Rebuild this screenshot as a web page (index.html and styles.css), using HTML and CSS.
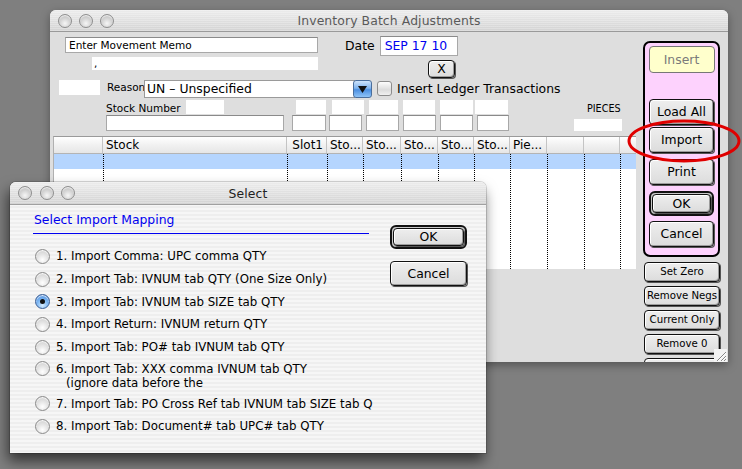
FILE: index.html
```html
<!DOCTYPE html>
<html>
<head>
<meta charset="utf-8">
<link rel="stylesheet" href="styles.css">
</head>
<body>
<div class="desk">
  <div class="win main-win">
    <div class="titlebar">
      <div class="lights"><span></span><span></span><span></span></div>
      <div class="title inactive">Inventory Batch Adjustments</div>
    </div>
    <div class="win-body">
      <div class="form">
        <div class="row r1">
          <div class="field memo">Enter Movement Memo</div>
          <div class="lbl-date">Date</div>
          <div class="field date">SEP 17 10</div>
        </div>
        <div class="row r2">
          <div class="field comma">,</div>
          <div class="btn xbtn">X</div>
        </div>
        <div class="row r3">
          <div class="blank reason-blank"></div>
          <div class="lbl-small reason-lbl">Reason</div>
          <div class="select">
            <span class="select-text">UN – Unspecified</span>
            <span class="select-arrow"><svg width="9" height="7" viewBox="0 0 9 7"><path d="M0 0 H9 L4.5 7 Z" fill="#111"/></svg></span>
          </div>
          <span class="checkbox"></span>
          <span class="chk-label">Insert Ledger Transactions</span>
        </div>
        <div class="row r4">
          <div class="lbl-small stock-lbl">Stock Number</div>
          <div class="blank b-stock"></div>
          <div class="blank b1"></div>
          <div class="blank b2"></div>
          <div class="blank b3"></div>
          <div class="blank b4"></div>
          <div class="blank b5"></div>
          <div class="blank b6"></div>
          <div class="lbl-tiny pieces">PIECES</div>
        </div>
        <div class="row r5">
          <div class="field stock-in"></div>
          <div class="field i1"></div>
          <div class="field i2"></div>
          <div class="field i3"></div>
          <div class="field i4"></div>
          <div class="field i5"></div>
          <div class="field i6"></div>
          <div class="blank pieces-in"></div>
        </div>
        <div class="table">
          <div class="thead">
            <div class="th c0"></div>
            <div class="th c1">Stock</div>
            <div class="th c2 right">Slot1</div>
            <div class="th c3">Sto...</div>
            <div class="th c4">Sto...</div>
            <div class="th c5">Sto...</div>
            <div class="th c6">Sto...</div>
            <div class="th c7">Sto...</div>
            <div class="th c8">Pie...</div>
            <div class="th c9"></div>
            <div class="th c10"></div>
            <div class="th c11"></div>
          </div>
          <div class="tbody">
            <div class="col c0"></div>
            <div class="col c1 dot"></div>
            <div class="col c2 dot"></div>
            <div class="col c3 dot"></div>
            <div class="col c4 dot"></div>
            <div class="col c5 dot"></div>
            <div class="col c6 dot"></div>
            <div class="col c7 dot"></div>
            <div class="col c8 dot"></div>
            <div class="col c9 dot"></div>
            <div class="col c10 dot"></div>
            <div class="col c11 dot"></div>
          </div>
        </div>
      </div>
      <div class="side">
        <div class="pink">
          <div class="btn insert">Insert</div>
          <div class="spacer"></div>
          <div class="btn big loadall">Load All</div>
          <div class="btn big import">Import</div>
          <div class="btn big print">Print</div>
          <div class="default-ring"><div class="btn big ok">OK</div></div>
          <div class="btn big cancel">Cancel</div>
        </div>
        <div class="btn small first">Set Zero</div>
        <div class="btn small">Remove Negs</div>
        <div class="btn small">Current Only</div>
        <div class="btn small">Remove 0</div>
        <div class="btn small"></div>
      </div>
      <svg class="grip" width="13" height="13" viewBox="0 0 13 13">
        <rect width="13" height="13" fill="#f4f4f4"/>
        <path d="M12 3 L3 12 M12 7 L7 12 M12 10 L10 12" stroke="#888" stroke-width="1"/>
        <path d="M12 4 L4 12 M12 8 L8 12" stroke="#fff" stroke-width="1"/>
      </svg>
    </div>
  </div>

  <svg class="circle-mark" width="120" height="50" viewBox="0 0 120 50">
    <ellipse cx="57" cy="23" rx="55" ry="20" fill="none" stroke="#e00000" stroke-width="3"/>
  </svg>

  <div class="win dialog">
    <div class="titlebar">
      <div class="lights"><span></span><span></span><span></span></div>
      <div class="title">Select</div>
    </div>
    <div class="dlg-body">
      <div class="dlg-left">
        <div class="dlg-heading">Select Import Mapping</div>
        <div class="options">
          <div class="opt"><span class="radio"></span><span>1. Import Comma: UPC comma QTY</span></div>
          <div class="opt"><span class="radio"></span><span>2. Import Tab: IVNUM tab QTY (One Size Only)</span></div>
          <div class="opt"><span class="radio on"><i></i></span><span>3. Import Tab: IVNUM tab SIZE tab QTY</span></div>
          <div class="opt"><span class="radio"></span><span>4. Import Return: IVNUM return QTY</span></div>
          <div class="opt"><span class="radio"></span><span>5. Import Tab: PO# tab IVNUM tab QTY</span></div>
          <div class="opt two"><span class="radio"></span><span class="opt-text"><span class="line">6. Import Tab: XXX comma IVNUM tab QTY</span><span class="line indent">(ignore data before the</span></span></div>
          <div class="opt clip"><span class="radio"></span><span class="clip-text">7. Import Tab: PO Cross Ref tab IVNUM tab SIZE tab Q</span></div>
          <div class="opt"><span class="radio"></span><span>8. Import Tab: Document# tab UPC# tab QTY</span></div>
        </div>
      </div>
      <div class="dlg-right">
        <div class="default-ring dlg-ok"><div class="btn dlg-btn">OK</div></div>
        <div class="btn dlg-btn dlg-cancel">Cancel</div>
      </div>
    </div>
  </div>
</div>
</body>
</html>
```
FILE: styles.css
```css
* { box-sizing: border-box; }
html, body { margin: 0; padding: 0; }
body {
  width: 742px; height: 469px; overflow: hidden;
  background: #7f7f7f;
  font-family: "DejaVu Sans", "Liberation Sans", sans-serif;
  color: #000;
}
.desk { position: relative; width: 742px; height: 469px; }

/* windows */
.win { position: absolute; overflow: hidden; }
.main-win {
  left: 50px; top: 10px; width: 678px; height: 352px;
  border-radius: 6px 6px 0 0;
  background: #dedede;
  box-shadow: 0 3px 10px rgba(0,0,0,0.35);
}
.titlebar {
  position: relative; height: 22px; flex: none;
  background: repeating-linear-gradient(to bottom, rgba(255,255,255,0.25) 0 1px, rgba(0,0,0,0) 1px 2px),
              linear-gradient(to bottom, #ececec, #d3d3d3);
  border-bottom: 1px solid #9a9a9a;
  display: flex; align-items: center; justify-content: center;
}
.lights { position: absolute; left: 8px; top: 4px; display: flex; gap: 7px; }
.lights span {
  width: 14px; height: 14px; border-radius: 50%;
  background: radial-gradient(circle at 50% 70%, #f6f6f6 0, #d6d6d6 45%, #b4b4b4 100%);
  border: 1px solid #8e8e8e;
  box-shadow: inset 0 1px 1px rgba(255,255,255,0.8);
}
.title { font-size: 12.4px; color: #222; letter-spacing: 0.1px; }
.title.inactive { color: #5a5a5a; }

.win-body { position: relative; display: flex; height: 330px; }
.form { width: 593px; flex: none; display: flex; flex-direction: column; }
.form > * { flex: none; }
.row { display: flex; }
.row > * { flex: none; }
.field {
  background: #fff;
  border: 1px solid #a8a8a8;
  border-top-color: #8a8a8a;
  font-size: 10.5px; line-height: 14px; padding-left: 3px;
}
.blank { background: #fff; }
.lbl-small { font-size: 10.5px; }
.lbl-tiny { font-size: 9.6px; }

.r1 { margin-top: 4px; height: 20px; }
.memo { margin-left: 15px; margin-top: 1px; width: 253px; height: 16px; }
.lbl-date { margin-left: 27px; font-size: 12.4px; line-height: 20px; }
.date { margin-left: 5px; width: 78px; height: 20px; color: #0000f0; font-size: 12.4px; line-height: 18px; padding-left: 4px; }

.r2 { height: 22px; margin-top: 1px; }
.comma { margin-left: 42px; width: 226px; height: 13px; border: none; line-height: 12px; padding-left: 2px; }
.xbtn { margin-left: 110px; margin-top: 3px; width: 27px; height: 18px; font-size: 11px; line-height: 16px; }

.r3 { height: 20px; margin-top: 1px; align-items: flex-start; }
.reason-blank { margin-left: 9px; width: 41px; height: 15px; }
.reason-lbl { margin-left: 7px; width: 37px; line-height: 14px; }
.select {
  display: flex; width: 228px; height: 18px;
}
.select-text {
  flex: 1; background: #fff; border: 1px solid #9a9a9a;
  font-size: 12.4px; line-height: 16px; padding-left: 2px;
}
.select-arrow {
  width: 19px; height: 18px; margin-left: -2px;
  border-radius: 3px;
  background: linear-gradient(to bottom, #cfe4fb 0, #7fb3ee 45%, #4c8fe0 55%, #8ec3f7 100%);
  border: 1px solid #4a6e9c;
  display: flex; align-items: center; justify-content: center;
}
.checkbox {
  margin-left: 5px; margin-top: 1px; width: 15px; height: 15px;
  border: 1px solid #8c8c8c; border-radius: 3px;
  background: linear-gradient(to bottom, #fdfdfd, #dcdcdc 60%, #f0f0f0);
}
.chk-label { margin-left: 5px; font-size: 12.4px; line-height: 17px; }

.r4 { height: 15px; margin-top: 0; }
.stock-lbl { margin-left: 56px; width: 80px; line-height: 15px; padding-top: 1px; }
.b-stock { width: 38px; height: 14px; }
.b1 { margin-left: 72px; width: 30px; height: 14px; }
.b2 { margin-left: 6px; width: 32px; height: 14px; }
.b3 { margin-left: 5px; width: 29px; height: 14px; }
.b4 { margin-left: 5px; width: 32px; height: 14px; }
.b5 { margin-left: 5px; width: 33px; height: 14px; }
.b6 { margin-left: 2px; width: 33px; height: 14px; }
.pieces { margin-left: 79px; line-height: 14px; padding-top: 2px; }

.r5 { height: 16px; margin-top: 0; }
.r5 .field { height: 16px; }
.stock-in { margin-left: 56px; width: 178px; }
.i1 { margin-left: 8px; width: 34px; }
.i2 { margin-left: 3px; width: 33px; }
.i3 { margin-left: 4px; width: 33px; }
.i4 { margin-left: 4px; width: 33px; }
.i5 { margin-left: 4px; width: 33px; }
.i6 { margin-left: 4px; width: 32px; }
.pieces-in { margin-left: 65px; margin-top: 4px; width: 48px; height: 12px; }

/* table */
.table {
  margin-left: 3px; margin-top: 5px; width: 583px; height: 133px;
  background: #fff;
  border-top: 1px solid #9a9a9a; border-left: 1px solid #b0b0b0;
}
.thead { display: flex; height: 17px; border-bottom: 1px solid #b4b4b4;
  background: linear-gradient(to bottom, #ffffff, #f1f1f1 50%, #e6e6e6); }
.th { flex: none; font-size: 12px; line-height: 16px; padding-left: 3px; border-right: 1px solid #c4c4c4; white-space: nowrap; overflow: hidden; }
.th.right { text-align: right; padding-right: 3px; }
.c0 { width: 49px; }
.c1 { width: 184px; }
.c2 { width: 40px; }
.c3 { width: 36px; }
.c4 { width: 38px; }
.c5 { width: 37px; }
.c6 { width: 36px; }
.c7 { width: 36px; }
.c8 { width: 37px; }
.c9 { width: 37px; }
.c10 { width: 36px; }
.c11 { flex: 1; border-right: none; }
.tbody {
  display: flex; height: 115px;
  background: linear-gradient(to bottom, #b5d5fe 0 15px, #fff 15px);
}
.col { flex: none; }
.col.dot { border-left: 1px dotted #000; }

/* right side */
.side { width: 77px; flex: none; display: flex; flex-direction: column; }
.side > * { flex: none; }
.pink {
  margin-top: 9px; width: 77px; height: 216px;
  border: 2px solid #000; border-radius: 7px;
  background: #fdd2fd;
  display: flex; flex-direction: column; align-items: center;
  padding-top: 3px;
}
.pink > * { flex: none; }
.spacer { height: 26px; }
.btn {
  border: 1px solid #111; border-radius: 4px;
  background: linear-gradient(to bottom, #eeeeee, #dcdcdc);
  box-shadow: inset 1px 1px 0 #fff, inset -1px -1px 0 #9c9c9c, 1px 1px 0 #555;
  text-align: center;
  font-size: 12.4px;
}
.btn.insert {
  width: 66px; height: 27px; line-height: 25px;
  background: #ffffcc; color: #7a7a7a; border-color: #777;
  box-shadow: none;
}
.btn.big { width: 65px; height: 26px; line-height: 24px; }
.import { margin-top: 2px; }
.print { margin-top: 6px; }
.default-ring {
  border: 2px solid #111; border-radius: 6px; padding: 1px;
  background: #c8c8c8;
}
.pink .default-ring { margin-top: 6px; }
.btn.ok { width: 59px; height: 19px; line-height: 17px; }
.cancel { margin-top: 5px; }
.btn.small {
  margin-left: 1px; width: 76px; height: 20px; line-height: 18px; font-size: 10.2px;
  margin-top: 4px;
}
.btn.small.first { margin-top: 5px; }
.grip { position: absolute; right: 1px; bottom: 0; }

.circle-mark { position: absolute; left: 627px; top: 118px; }

/* dialog */
.dialog {
  left: 10px; top: 182px; width: 476px; height: 271px;
  border-radius: 6px 6px 0 0;
  background: repeating-linear-gradient(to bottom, #eeeeee 0 2px, #f6f6f6 2px 4px);
  box-shadow: -2px 8px 14px rgba(0,0,0,0.6), 0 0 0 1px rgba(0,0,0,0.15);
  overflow: visible;
}
.dialog .titlebar { border-radius: 6px 6px 0 0; height: 23px; border-bottom: 1px solid #a0a0a0; }
.dialog .lights { left: 8px; top: 4px; gap: 7.5px; }
.dlg-body { display: flex; height: 248px; }
.dlg-left { width: 371px; flex: none; overflow: hidden; padding-left: 23px; }
.dlg-heading {
  width: 336px; font-size: 12.4px; color: #0000f0;
  line-height: 16px; padding-top: 7px; padding-left: 1px; padding-bottom: 5px;
  border-bottom: 1px solid #0000f0;
}
.options { margin-top: 11px; }
.opt { display: flex; align-items: center; height: 22.7px; font-size: 11.8px; white-space: nowrap; padding-left: 2px; }
.opt .radio { margin-right: 6px; }
.opt.two { height: 34px; align-items: flex-start; padding-top: 4px; }
.opt-text { display: flex; flex-direction: column; }
.line { display: block; height: 13px; line-height: 14px; }
.opt.two .radio { margin-top: -1px; }
.indent { padding-left: 10px; margin-top: 1px; }
.clip-text { display: block; width: 326px; overflow: hidden; }
.radio {
  flex: none; width: 15px; height: 15px; border-radius: 50%;
  border: 1px solid #8a8a8a;
  background: radial-gradient(circle at 50% 75%, #ffffff 0, #e8e8e8 40%, #c8c8c8 100%);
  box-shadow: inset 0 1px 1px rgba(255,255,255,0.9);
  display: flex; align-items: center; justify-content: center;
}
.radio.on {
  border-color: #375c94;
  background: radial-gradient(circle at 50% 80%, #d6ecff 0, #7db7f3 45%, #3e82d8 100%);
}
.radio.on i { width: 5px; height: 5px; border-radius: 50%; background: #111; display: block; }
.dlg-right { padding-left: 9px; padding-top: 20px; }
.dlg-ok { width: 77px; }
.dlg-ok .btn { width: 71px; height: 18px; line-height: 16px; }
.btn.dlg-cancel { margin-top: 12px; width: 77px; height: 25px; line-height: 23px; }
```
